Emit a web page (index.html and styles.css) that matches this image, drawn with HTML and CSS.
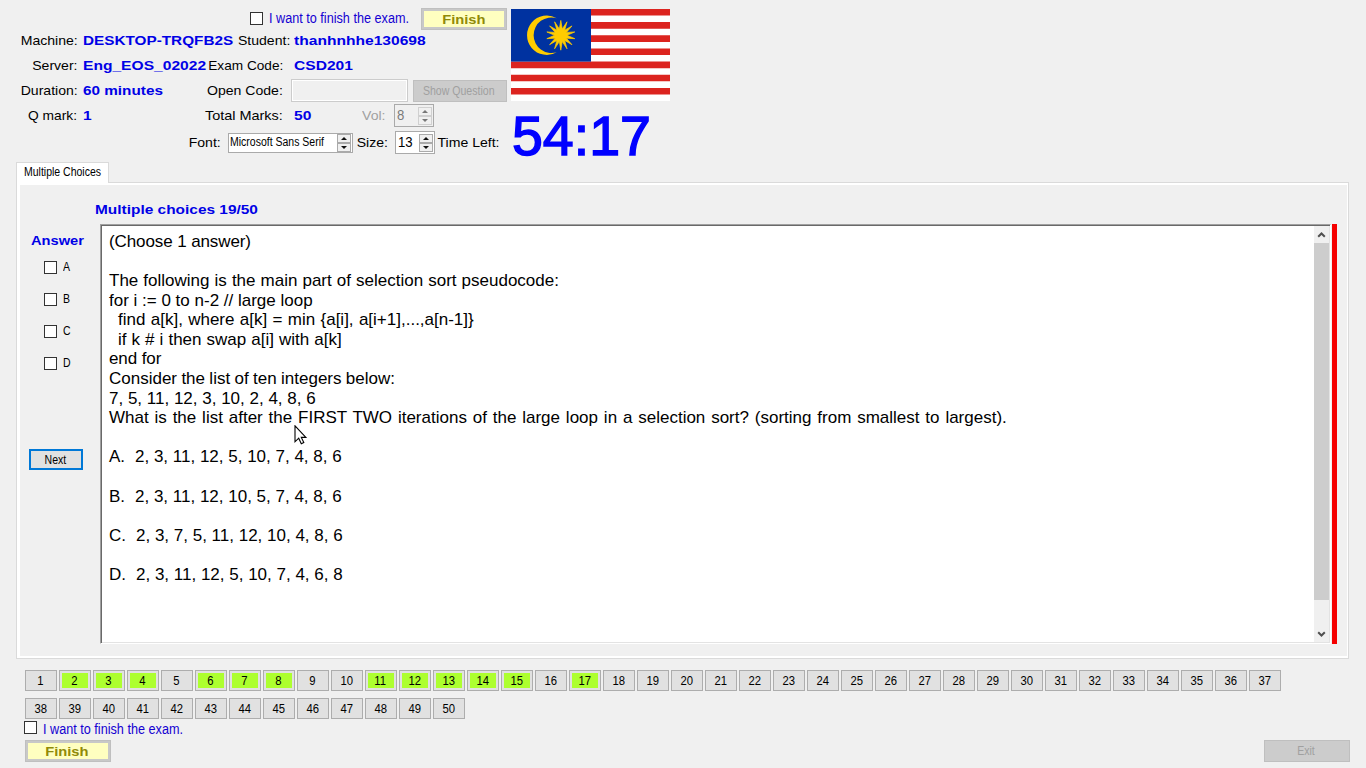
FILE: index.html
```html
<!DOCTYPE html>
<html lang="en">
<head>
<meta charset="utf-8">
<title>Exam</title>
<link rel="stylesheet" href="styles.css">
</head>
<body>
<header class="header">
  <div class="info">
    <div class="finish-row">
      <span class="check"></span><span class="agree">I want to finish the exam.</span>
      <button class="btn finish"><span>Finish</span></button>
    </div>
    <div class="row">
      <span class="label first"><span>Machine:</span></span><span class="value v1"><b class="w113">DESKTOP-TRQFB2S</b></span>
      <span class="label second shift"><span>Student:</span></span><span class="value"><b class="w1155">thanhnhhe130698</b></span>
    </div>
    <div class="row">
      <span class="label first"><span>Server:</span></span><span class="value v1"><b class="w1155">Eng_EOS_02022</b></span>
      <span class="label second"><span class="w101">Exam Code:</span></span><span class="value"><b class="w1155">CSD201</b></span>
    </div>
    <div class="row">
      <span class="label first"><span>Duration:</span></span><span class="value v1"><b class="w113">60 minutes</b></span>
      <span class="label second"><span>Open Code:</span></span><span class="code-input"></span><button class="btn off show"><span>Show Question</span></button>
    </div>
    <div class="row">
      <span class="label first"><span class="w102">Q mark:</span></span><span class="value v1"><b class="w1155">1</b></span>
      <span class="label second"><span class="w107">Total Marks:</span></span><span class="value marks"><b class="w1155">50</b></span>
      <span class="label vol"><span>Vol:</span></span>
      <span class="num disabled"><span>8</span><span class="spin"><i class="up"></i><i class="down"></i></span></span>
    </div>
    <div class="row font-row">
      <span class="label font"><span>Font:</span></span>
      <span class="num font-box"><span class="small">Microsoft Sans Serif</span><span class="spin"><i class="up"></i><i class="down"></i></span></span>
      <span class="label size"><span>Size:</span></span>
      <span class="num"><span>13</span><span class="spin"><i class="up"></i><i class="down"></i></span></span>
      <span class="label left"><span>Time Left:</span></span>
    </div>
  </div>
  <div class="side">
    <svg class="flag" width="159" height="92" viewBox="0 0 159 92">
      <rect width="159" height="92" fill="#fff"/>
      <path fill="#dc241f" d="M0 0h159v6.6H0zM0 13.1h159v6.6H0zM0 26.3h159v6.6H0zM0 39.4h159V46H0zM0 52.6h159v6.6H0zM0 65.7h159v6.6H0zM0 78.9h159v6.6H0z"/>
      <rect width="80" height="52.6" fill="#0032a0"/>
      <path fill="#fc0" d="M45.7 9.2A19.7 19.7 0 1 0 45.7 43.2A17.8 17.8 0 1 1 45.7 9.2z"/>
      <polygon fill="#fc0" stroke="#fc0" stroke-width=".8" transform="translate(49.8 26.3) scale(.9 .93) translate(-50 -26.3)" points="50.0,10.3 51.6,19.5 56.9,11.8 54.3,20.8 62.4,16.2 56.2,23.2 65.5,22.7 56.9,26.3 65.5,29.9 56.2,29.4 62.4,36.4 54.3,31.8 56.9,40.8 51.6,33.1 50.0,42.3 48.4,33.1 43.1,40.8 45.7,31.8 37.6,36.4 43.8,29.4 34.5,29.9 43.1,26.3 34.5,22.7 43.8,23.2 37.6,16.2 45.7,20.8 43.1,11.8 48.4,19.5"/>
    </svg>
    <div class="timer">54:17</div>
  </div>
</header>

<main class="tabs">
  <div class="tab"><span>Multiple Choices</span></div>
  <section class="panel">
    <h1 class="title"><span>Multiple choices 19/50</span></h1>
    <div class="work">
      <div class="answers">
        <div class="answer-title"><span>Answer</span></div>
        <div class="option"><span class="check"></span><span class="small">A</span></div>
        <div class="option"><span class="check"></span><span class="small">B</span></div>
        <div class="option"><span class="check"></span><span class="small">C</span></div>
        <div class="option"><span class="check"></span><span class="small">D</span></div>
        <button class="btn next"><span class="small">Next</span></button>
      </div>
      <div class="textbox">
        <div class="question">
          <p class="n1">(Choose 1 answer)</p>
          <p></p>
          <p class="n2">The following is the main part of selection sort pseudocode:</p>
          <p>for i := 0 to n-2 // large loop</p>
          <p class="indent n3">find a[k], where a[k] = min {a[i], a[i+1],...,a[n-1]}</p>
          <p class="indent n2">if k # i then swap a[i] with a[k]</p>
          <p class="n1">end for</p>
          <p class="n4">Consider the list of ten integers below:</p>
          <p>7, 5, 11, 12, 3, 10, 2, 4, 8, 6</p>
          <p class="n5">What is the list after the FIRST TWO iterations of the large loop in a selection sort? (sorting from smallest to largest).</p>
          <p></p>
          <p><span class="letter">A.</span>2, 3, 11, 12, 5, 10, 7, 4, 8, 6</p>
          <p></p>
          <p><span class="letter">B.</span>2, 3, 11, 12, 10, 5, 7, 4, 8, 6</p>
          <p></p>
          <p><span class="letter wide">C.</span>2, 3, 7, 5, 11, 12, 10, 4, 8, 6</p>
          <p></p>
          <p><span class="letter wide">D.</span>2, 3, 11, 12, 5, 10, 7, 4, 6, 8</p>
        </div>
        <div class="scroll">
          <svg width="16" height="17" viewBox="0 0 16 17"><path d="M4.2 10.8 7.5 7.5l3.3 3.3" fill="none" stroke="#505050" stroke-width="2"/></svg>
          <div class="thumb"></div>
          <svg width="16" height="17" viewBox="0 0 16 17"><path d="M4.2 7.2 7.5 10.5l3.3-3.3" fill="none" stroke="#505050" stroke-width="2"/></svg>
        </div>
        <svg class="cursor" width="14" height="21" viewBox="0 0 14 21"><path d="M1 .8v16l3.7-3.6 2.6 5.5 2.5-1.2-2.5-5.1h4.6z" fill="#fff" stroke="#000" stroke-width="1.1"/></svg>
      </div>
      <div class="bar"></div>
    </div>
  </section>
</main>

<footer class="footer">
  <nav class="numbers" id="numbers"></nav>
  <div class="agree-row"><span class="check"></span><span class="agree">I want to finish the exam.</span></div>
  <div class="actions">
    <button class="btn finish"><span>Finish</span></button>
    <button class="btn off exit"><span>Exit</span></button>
  </div>
</footer>
<script src="app.js"></script>
</body>
</html>
```
FILE: styles.css
```css
* { box-sizing: border-box; }

body {
  margin: 0;
  width: 1366px;
  height: 768px;
  overflow: hidden;
  background: #f0f0f0;
  color: #000;
  font: 13.5px/16px "Liberation Sans", Arial, sans-serif;
  white-space: nowrap;
}

b, .label > span, .small, .agree, .btn > span, .title > span,
.answer-title > span, .tab > span { display: inline-block; }

/* Header */
.header { display: flex; height: 162px; }
.info { width: 511px; flex: none; }
.finish-row { display: flex; height: 28px; padding: 8px 0 0 250px; }
.finish-row .check { margin-top: 4px; }
.check { width: 13px; height: 13px; border: 1px solid #333; background: #fff; flex: none; }
.agree { width: 141px; margin-left: 6px; font-size: 14px; line-height: 20px; color: #1400d2; transform: scaleX(.904); transform-origin: 0 50%; }
.finish-row .finish { margin-left: 11px; }

.row { display: flex; align-items: center; height: 25px; }
.label { flex: none; text-align: right; }
.label > span { transform: scaleX(1.042); transform-origin: 100% 50%; }
.label > .w101 { transform: scaleX(1.01); }
.label > .w102 { transform: scaleX(1.02); }
.label > .w107 { transform: scaleX(1.07); }
.first { width: 77.5px; }
.second { width: 78px; padding-right: 1px; }
.second.shift { padding-right: 0; margin-right: -6px; width: 84px; }
.value { width: 120px; padding-left: 10px; color: #0000e6; flex: none; }
.value b { transform-origin: 0 50%; }
.v1 { width: 128.5px; padding-left: 5.5px; }
.w113 { transform: scaleX(1.133); }
.w1155 { transform: scaleX(1.155); }
.marks { width: 70px; }
.code-input { width: 117px; height: 23px; margin-left: 7px; border: 1px solid #ccc; outline: 1px solid #fff; outline-offset: -2px; }

.btn {
  display: flex;
  align-items: center;
  justify-content: center;
  flex: none;
  height: 22px;
  padding: 0;
  border: 1px solid #adadad;
  background: #e1e1e1;
  color: #000;
  font: 12px/14px "Liberation Sans", Arial, sans-serif;
}
.finish { width: 86px; padding-top: 2px; border: 3px solid #c8c8c8; outline: 1px solid #bfbfbf; outline-offset: -1px; background: #ffffc0; color: #908a08; font-size: 13.5px; font-weight: 700; }
.finish > span { padding-right: 1px; transform: scaleX(1.09); }
.off { background: #ccc; border-color: #bfbfbf; color: #a0a0a0; }
.off > span { transform: scaleX(.88); }
.show { width: 94px; margin-left: 5px; padding-right: 2px; }

.num { display: flex; justify-content: space-between; width: 40px; height: 23px; padding: 2px 1px 2px 2px; border: 1px solid #aaa; background: #fff; font-size: 14px; line-height: 17px; flex: none; }
.num > span:first-child { transform: scaleX(.94); transform-origin: 0 50%; }
.disabled { background: #f0f0f0; color: #7a7a7a; }
.spin { display: flex; flex-direction: column; width: 14px; height: 18px; }
.spin i { display: flex; align-items: center; justify-content: center; height: 9px; border: 1px solid #aaa; background: #f0f0f0; }
.disabled .spin i { border-color: #d0d0d0; }
.spin i::before { content: ""; border: 3px solid transparent; }
.spin .up::before { border-top: 0; border-bottom-color: #111; }
.spin .down::before { border-bottom: 0; border-top-color: #111; }
.disabled .spin .up::before { border-bottom-color: #777; }
.disabled .spin .down::before { border-top-color: #777; }
.vol { width: 32px; margin-right: 8px; color: #a0a0a0; }
.font-row { height: 29px; }
.font { width: 221px; margin-right: 7px; }
.font-box { width: 125px; height: 20px; padding: 0 1px 0 1px; }
.num.font-box > .small { transform: scaleX(.875); }
.size { width: 35px; margin-right: 7px; }
.left { width: 65px; }
.small { font-size: 12px; transform: scaleX(.875); transform-origin: 0 50%; }

.side { padding-top: 9px; }
.flag { display: block; }
.timer { margin-top: 4px; height: 60px; padding-left: 1px; font-size: 55.5px; line-height: 62px; color: #00f; -webkit-text-stroke: 1.5px #00f; }

/* Tab and panel */
.tab { position: relative; z-index: 1; width: 93px; height: 21px; margin: 0 0 -1px 16px; padding-left: 7px; border: 1px solid #dadada; border-bottom: 0; background: #fff; font-size: 12px; line-height: 19px; }
.tab > span { transform: scaleX(.875); transform-origin: 0 50%; }
.panel { width: 1333px; height: 477px; margin-left: 16px; border: 1px solid #dadada; background: #f0f0f0; box-shadow: inset 3px 2px #fff, inset -1px -2px #fff; }
.title { margin: 0; height: 41px; padding: 19px 0 0 78px; font-size: 13.5px; line-height: 16px; color: #0000e6; }
.title > span { transform: scaleX(1.143); transform-origin: 0 50%; }
.work { display: flex; height: 420px; }
.answers { width: 83px; padding: 9px 0 0 12px; flex: none; }
.answer-title { height: 18px; padding-left: 2px; font-weight: 700; color: #0000e6; }
.answer-title > span { transform: scaleX(1.086); transform-origin: 0 50%; }
.option { display: flex; align-items: center; height: 32px; padding-left: 15px; gap: 6px; }
.next { width: 54px; height: 21px; margin-top: 70px; padding-right: 2px; border: 2px solid #0078d7; }
.next > .small { transform-origin: 50% 50%; }

.textbox { position: relative; display: flex; width: 1231px; height: 420px; border: 1px solid; border-color: #a0a0a0 #fff #fff #a0a0a0; background: #fff; box-shadow: inset 1px 1px #696969, inset -1px -1px #e3e3e3; flex: none; }
.question { flex: 1; padding: 7px 0 0 8px; font-size: 17px; line-height: 19.6px; }
.question p { margin: 0; height: 19.58px; }
.indent { padding-left: 9px; }
.n1 { letter-spacing: -.1px; }
.n2 { word-spacing: .33px; }
.n3 { word-spacing: .6px; }
.n4 { word-spacing: -.37px; }
.n5 { word-spacing: 1.12px; }
.letter { display: inline-block; width: 26px; }
.wide { width: 27px; }
.scroll { display: flex; flex-direction: column; justify-content: space-between; width: 15px; margin: 1px; background: #f0f0f0; }
.thumb { width: 15px; height: 357px; margin-bottom: auto; background: #cdcdcd; }
.cursor { position: absolute; left: 193px; top: 200px; }
.bar { width: 5px; margin-left: 1px; background: #f50000; }

/* Question numbers and actions */
.footer { padding: 11px 16px 0 25px; }
.numbers { display: flex; flex-wrap: wrap; gap: 7px 2px; width: 1260px; }
.cell { width: 32px; height: 21px; padding-right: 1px; }
.cell > span { transform: scaleX(.94); }
.done { background: #adff2f; box-shadow: inset 0 0 0 2px #e1e1e1; }
.agree-row { display: flex; margin: 2px 0 0 -1px; height: 19px; }
.agree-row .agree { line-height: 17px; }
.actions { display: flex; justify-content: space-between; }
.actions .finish { padding-right: 2px; }
.exit { width: 86px; padding-right: 2px; }
```
FILE: app.js
```js
// Question navigation: answered questions are highlighted.
const answered = new Set([2, 3, 4, 6, 7, 8, 11, 12, 13, 14, 15, 17]);
const nav = document.getElementById('numbers');
for (let n = 1; n <= 50; n++) {
  const button = document.createElement('button');
  button.className = 'btn cell' + (answered.has(n) ? ' done' : '');
  const text = document.createElement('span');
  text.textContent = n;
  button.append(text);
  nav.append(button);
}
```
